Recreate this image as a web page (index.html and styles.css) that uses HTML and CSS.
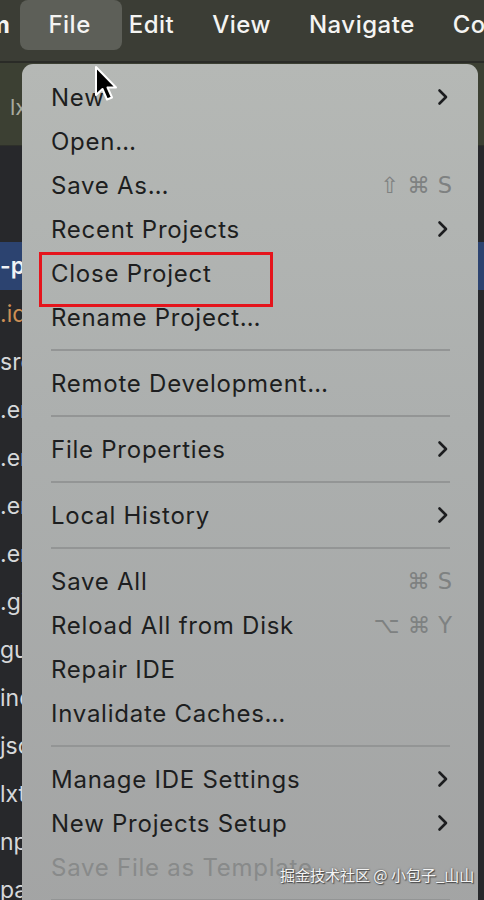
FILE: index.html
```html
<!DOCTYPE html>
<html>
<head>
<meta charset="utf-8">
<link rel="stylesheet" href="styles.css">
</head>
<body>
<div class="screen">
  <div class="menubar">
    <span class="mb-item app">m</span>
    <span class="mb-item active">File</span>
    <span class="mb-item">Edit</span>
    <span class="mb-item">View</span>
    <span class="mb-item">Navigate</span>
    <span class="mb-item">Code</span>
  </div>
  <div class="tabbar"><span class="tab-text">lx</span></div>
  <div class="tree">
    <div class="row"></div>
    <div class="row"></div>
    <div class="row sel">-project</div>
    <div class="row orange">.idea</div>
    <div class="row">src</div>
    <div class="row">.env</div>
    <div class="row">.env</div>
    <div class="row">.env</div>
    <div class="row">.env</div>
    <div class="row">.gitignore</div>
    <div class="row">gulpfile</div>
    <div class="row">index</div>
    <div class="row">jsconfig</div>
    <div class="row">lxt</div>
    <div class="row">npm</div>
    <div class="row">package</div>
  </div>

  <div class="menu">
    <div class="item"><span class="label">New</span><span class="chev"><svg width="12" height="18" viewBox="0 0 12 18"><path d="M2.5 2.5 L9 9 L2.5 15.5" fill="none" stroke="#1c1d1f" stroke-width="2.6" stroke-linecap="round" stroke-linejoin="round"/></svg></span></div>
    <div class="item"><span class="label">Open…</span></div>
    <div class="item"><span class="label">Save As…</span><span class="keys">⇧⌘S</span></div>
    <div class="item"><span class="label">Recent Projects</span><span class="chev"><svg width="12" height="18" viewBox="0 0 12 18"><path d="M2.5 2.5 L9 9 L2.5 15.5" fill="none" stroke="#1c1d1f" stroke-width="2.6" stroke-linecap="round" stroke-linejoin="round"/></svg></span></div>
    <div class="item marked"><span class="label">Close Project</span></div>
    <div class="item"><span class="label">Rename Project…</span></div>
    <div class="sep"></div>
    <div class="item"><span class="label">Remote Development…</span></div>
    <div class="sep"></div>
    <div class="item"><span class="label">File Properties</span><span class="chev"><svg width="12" height="18" viewBox="0 0 12 18"><path d="M2.5 2.5 L9 9 L2.5 15.5" fill="none" stroke="#1c1d1f" stroke-width="2.6" stroke-linecap="round" stroke-linejoin="round"/></svg></span></div>
    <div class="sep"></div>
    <div class="item"><span class="label">Local History</span><span class="chev"><svg width="12" height="18" viewBox="0 0 12 18"><path d="M2.5 2.5 L9 9 L2.5 15.5" fill="none" stroke="#1c1d1f" stroke-width="2.6" stroke-linecap="round" stroke-linejoin="round"/></svg></span></div>
    <div class="sep"></div>
    <div class="item"><span class="label">Save All</span><span class="keys">⌘S</span></div>
    <div class="item"><span class="label">Reload All from Disk</span><span class="keys">⌥⌘Y</span></div>
    <div class="item"><span class="label">Repair IDE</span></div>
    <div class="item"><span class="label">Invalidate Caches…</span></div>
    <div class="sep"></div>
    <div class="item"><span class="label">Manage IDE Settings</span><span class="chev"><svg width="12" height="18" viewBox="0 0 12 18"><path d="M2.5 2.5 L9 9 L2.5 15.5" fill="none" stroke="#1c1d1f" stroke-width="2.6" stroke-linecap="round" stroke-linejoin="round"/></svg></span></div>
    <div class="item"><span class="label">New Projects Setup</span><span class="chev"><svg width="12" height="18" viewBox="0 0 12 18"><path d="M2.5 2.5 L9 9 L2.5 15.5" fill="none" stroke="#1c1d1f" stroke-width="2.6" stroke-linecap="round" stroke-linejoin="round"/></svg></span></div>
    <div class="item disabled"><span class="label">Save File as Template…</span></div>
    <div class="sep"></div>
    <div class="item"><span class="label">Print…</span></div>
  </div>

  <svg class="cursor" width="26" height="40" viewBox="0 0 26 40">
    <path d="M2 2 L2 30 L8.5 24 L13 34.5 L18 32.5 L13.5 22.5 L22 22.5 Z" fill="#000" stroke="#fff" stroke-width="2" stroke-linejoin="round"/>
  </svg>

  <div class="watermark">掘金技术社区 @ 小包子_山山</div>
</div>
</body>
</html>
```

FILE: styles.css
```css
html, body {
  margin: 0;
  padding: 0;
}
body {
  background: #27282b;
  overflow: hidden;
}
.screen {
  position: relative;
  width: 484px;
  height: 900px;
  overflow: hidden;
  background: #27282b;
  font-family: Inter, "Noto Sans", sans-serif;
}
.menubar {
  height: 61px;
  background: #3b3d35;
  border-bottom: 2px solid #2a2b27;
  display: flex;
  align-items: flex-start;
  gap: 38px;
  margin-left: -12px;
}
.mb-item {
  position: relative;
  height: 50px;
  line-height: 50px;
  color: #f4f4f2;
  font-size: 24px;
  font-weight: 500;
  letter-spacing: 0.5px;
  white-space: nowrap;
}
.mb-item.app {
  font-weight: 700;
}
.mb-item.active::before {
  content: "";
  position: absolute;
  left: -28px;
  right: -31px;
  top: 0;
  bottom: 0;
  background: #5d5f58;
  border-radius: 8px;
  z-index: -1;
}
.mb-item.active {
  z-index: 0;
}
.tabbar {
  height: 82px;
  background: #3c4033;
  display: flex;
  align-items: center;
  border-bottom: 1px solid #2e302a;
}
.tab-text {
  color: #a9ab9f;
  font-size: 22px;
  padding-left: 10px;
  margin-top: 6px;
}
.tree {
  display: flex;
  flex-direction: column;
}
.row {
  height: 48px;
  line-height: 48px;
  color: #d6d8da;
  font-size: 23px;
  white-space: nowrap;
}
.row.sel {
  background: #2c4370;
  color: #f0f2f5;
  font-weight: 600;
}
.row.orange {
  color: #cd8f55;
}

/* popup menu */
.menu {
  position: absolute;
  left: 22px;
  top: 64px;
  width: 456px;
  height: 900px;
  border-radius: 11px;
  background: linear-gradient(180deg, #b5b8b5 0%, #acafae 40%, #a2a3a3 100%);
  padding-top: 11px;
  box-sizing: border-box;
  display: flex;
  flex-direction: column;
}
.item {
  position: relative;
  height: 44px;
  display: flex;
  align-items: center;
  padding-left: 29px;
  padding-right: 26px;
  font-size: 24px;
  color: #1d1e20;
  flex-shrink: 0;
}
.label {
  flex: 1;
  white-space: nowrap;
  letter-spacing: 0.75px;
}
.chev {
  display: flex;
  align-items: center;
  margin-right: 3px;
}
.keys {
  color: #7e8181;
  font-family: "DejaVu Sans", sans-serif;
  font-size: 22.5px;
  letter-spacing: 8px;
  margin-right: -8px;
}
.item.disabled {
  color: #888a8a;
}
.item.marked::after {
  content: "";
  position: absolute;
  left: 17px;
  top: 1px;
  width: 228px;
  height: 49px;
  border: 3px solid #e5141c;
}
.sep {
  height: 22px;
  flex-shrink: 0;
  display: flex;
  align-items: center;
  padding: 0 28px 0 29px;
}
.sep::before {
  content: "";
  flex: 1;
  height: 2px;
  background: #939595;
}
.cursor {
  position: absolute;
  left: 94px;
  top: 65px;
}
.watermark {
  position: absolute;
  left: 280px;
  top: 864px;
  font-family: "Noto Sans CJK SC", sans-serif;
  font-size: 15px;
  color: #f4f4f4;
  text-shadow: 0 0 2px #555, 1px 1px 1px #444;
  white-space: nowrap;
}
```
